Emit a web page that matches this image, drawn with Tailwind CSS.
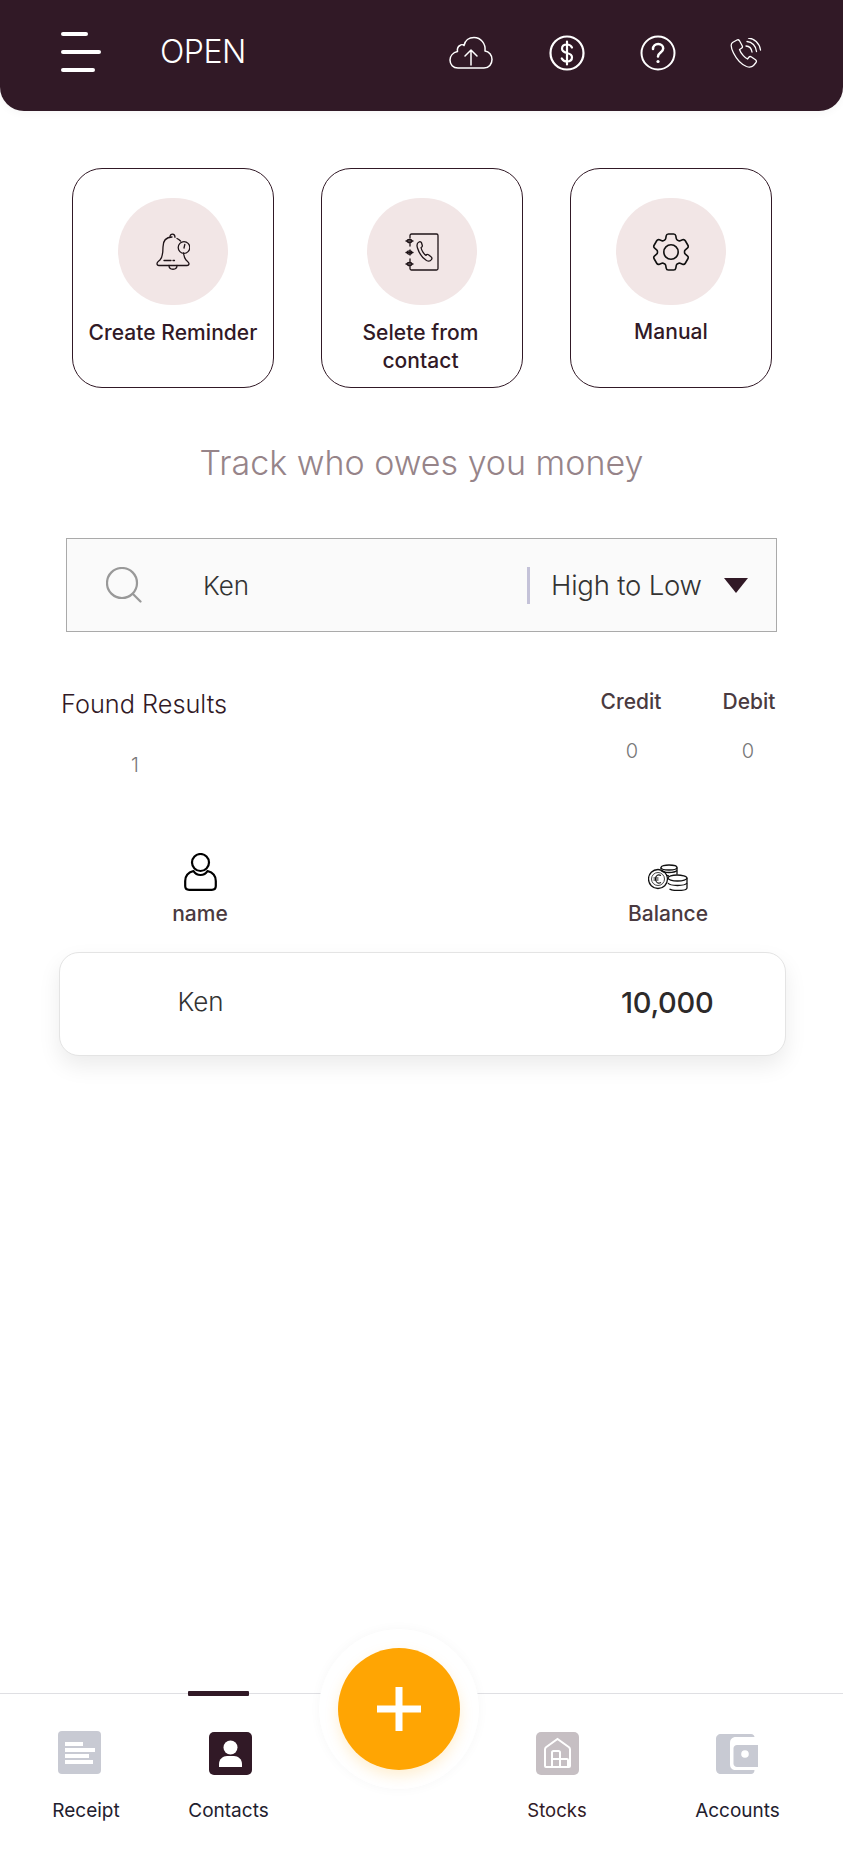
<!DOCTYPE html>
<html><head><meta charset="utf-8"><script src="https://cdn.jsdelivr.net/npm/@tailwindcss/browser@4"></script></head>
<body class="m-0 bg-white">
<div class="relative flex h-[1850px] w-[843px] flex-col overflow-hidden bg-white font-['Inter',sans-serif]">
  <!-- header -->
  <header class="flex h-[111px] shrink-0 items-center rounded-b-[24px] bg-[#311926] pl-[61px] shadow-[0_2px_8px_rgba(0,0,0,0.04)]">
    <div class="flex w-[99px] flex-col gap-[14px] pb-[8px]">
      <span class="h-[4px] w-[27px] rounded-full bg-white"></span>
      <span class="h-[4px] w-[40px] rounded-full bg-white"></span>
      <span class="h-[4px] w-[34px] rounded-full bg-white"></span>
    </div>
    <span class="w-[289px] pb-[7px] text-[32px] font-light leading-none tracking-[-0.5px] text-white">OPEN</span>
    <div class="flex items-center pb-[6px]">
      <svg class="mr-[56px] h-[34px] w-[44px]" viewBox="0 0 44 34" fill="none" stroke="#fff" stroke-width="1.5" stroke-linecap="round" stroke-linejoin="round"><path d="M9 32h26c5 0 8-4 8-8.500 0-4.500-3-8-7-8.500 1-7-4-13.500-11-13.500-5 0-9 3-10 8-1-1-3-1-4 0-2 1-3 3-2.500 6C4 16.500 1 20 1 24c0 4.500 3 8 8 8z"/><path d="M22 29V14m-6 6 6-6 6 6"/></svg>
      <svg class="mr-[55px] h-[36px] w-[36px]" viewBox="0 0 36 36" fill="none" stroke="#fff" stroke-linecap="round"><circle cx="18" cy="18" r="16.500" stroke-width="2.200"/><path d="M23 12.500c-1-2-3-3-5-3-3 0-5 1.700-5 4.200s2 3.500 5 4.300 5 1.800 5 4.300-2 4.200-5 4.200c-2.200 0-4.200-1-5.200-3M18 6.500v23" stroke-width="2.200"/></svg>
      <svg class="mr-[54px] h-[36px] w-[36px]" viewBox="0 0 36 36" fill="none" stroke="#fff" stroke-linecap="round"><circle cx="18" cy="18" r="16.500" stroke-width="2"/><path d="M13 14c0-3 2.200-5 5.200-5s5 2 5 4.500c0 4-5.200 4-5.200 8" stroke-width="2.500"/><circle cx="18" cy="26.500" r="1.600" fill="#fff" stroke="none"/></svg>
      <svg class="h-[30px] w-[32px]" viewBox="0 0 32 30" fill="none" stroke="#fff" stroke-width="1.300" stroke-linecap="round" stroke-linejoin="round"><path d="M7 2 2.500 4.500C0.500 6 1 10 3.500 15c3 6 8 11.500 13 13.500 3 1 5.500.5 7-1l2.500-3c.8-1 .5-2-.5-2.700l-4-2.800c-1-.7-2-.5-2.700.3l-1.300 1.700c-2-.7-6.500-5-8-9.500l2-1.200c1-.6 1.200-1.500.7-2.500L9.500 2.800C9 2 8 1.500 7 2z"/><path d="M16 8c3 .2 5.500 2.500 6 6M17 3.500c5 .3 9 4.500 9.500 10M18.500 0c5.500.5 11 5 12 12"/></svg>
    </div>
  </header>

  <!-- action cards -->
  <section class="ml-[72px] mt-[57px] flex gap-[47px]">
    <div class="flex h-[220px] w-[202px] flex-col items-center rounded-[30px] border border-[#311926] pt-[29px]">
      <div class="flex h-[107px] w-[110px] items-center justify-center rounded-full bg-[#f2e6e6]">
        <svg class="h-[38px] w-[34px]" viewBox="0 0 34 38" fill="none" stroke="#1f1418" stroke-width="1.300" stroke-linecap="round" stroke-linejoin="round"><path d="M16 4c-6 0-9 4-9 10 0 5 0 10-3 13-1 1-3 2-3 3.500S2 32.500 3 32.500h28c1.500 0 2-1 2-2s-2-2.500-3-3.500c-1.500-1.500-2-3.500-2.500-7"/><path d="M14 4c0-4 5-4 5 .3M21 5.500c1.500.7 2.500 1.500 3.500 2.500"/><path d="M13 32.500c0 5 8 5 8 0M8 27.500h7M17 27.500h1.500"/><circle cx="28" cy="14.500" r="5.800"/><path d="m28.800 11.500-.8 3.500"/></svg>
      </div>
      <p class="mt-[14px] whitespace-nowrap text-center text-[21px] font-medium leading-[28px] tracking-[0.05px] text-[#311926]">Create Reminder</p>
    </div>
    <div class="flex h-[220px] w-[202px] flex-col items-center rounded-[30px] border border-[#311926] pt-[29px]">
      <div class="flex h-[107px] w-[110px] items-center justify-center rounded-full bg-[#f2e6e6]">
        <svg class="h-[38px] w-[34px]" viewBox="0 0 34 38" fill="none" stroke="#1f1418" stroke-width="1.300" stroke-linecap="round" stroke-linejoin="round"><path d="M5 5V2.500c0-.800.700-1.500 1.500-1.500h25c.800 0 1.500.700 1.500 1.500v33c0 .800-.700 1.500-1.500 1.500h-25C5.700 37 5 36.300 5 35.500V33M5 22v-5M5 13V10M5 26v3"/><path d="M1 8h7M1 19.500h7M1 31h7"/><ellipse cx="4.500" cy="8" rx="2.300" ry="1.600"/><ellipse cx="4.500" cy="19.500" rx="2.300" ry="1.600"/><ellipse cx="4.500" cy="31" rx="2.300" ry="1.600"/><path d="M14 9c-2 1-2.500 3-1.500 6 1.500 5 5 10 9 12.500 2 1 4 .5 5-1 .8-1 .5-2-.5-2.700l-2.500-2c-1-.6-2-.3-2.500.5-2-1-4.500-5-5-7.800 1-.3 1.500-1 1.300-2L16.500 9.800c-.3-1-1.500-1.300-2.500-.8z"/></svg>
      </div>
      <p class="mr-[3px] mt-[14px] w-[170px] text-center text-[21px] font-medium leading-[28px] tracking-[0.05px] text-[#311926]">Selete from contact</p>
    </div>
    <div class="flex h-[220px] w-[202px] flex-col items-center rounded-[30px] border border-[#311926] pt-[29px]">
      <div class="flex h-[107px] w-[110px] items-center justify-center rounded-full bg-[#f2e6e6]">
        <svg class="h-[48px] w-[48px]" viewBox="0 0 24 24" fill="none" stroke="#111" stroke-width=".8" stroke-linecap="round" stroke-linejoin="round"><path d="M9.594 3.940c.090-.542.560-.940 1.110-.940h2.593c.550 0 1.020.398 1.110.940l.213 1.281c.063.374.313.686.645.870.074.040.147.083.220.127.324.196.720.257 1.075.124l1.217-.456a1.125 1.125 0 0 1 1.370.490l1.296 2.247a1.125 1.125 0 0 1-.260 1.431l-1.003.827c-.293.240-.438.613-.431.992a6.759 6.759 0 0 1 0 .255c-.007.378.138.750.430.990l1.005.828c.424.350.534.954.260 1.430l-1.298 2.247a1.125 1.125 0 0 1-1.369.491l-1.217-.456c-.355-.133-.750-.072-1.076.124a6.570 6.570 0 0 1-.220.128c-.331.183-.581.495-.644.869l-.213 1.280c-.090.543-.560.941-1.110.941h-2.594c-.550 0-1.020-.398-1.110-.940l-.213-1.281c-.062-.374-.312-.686-.644-.870a6.520 6.520 0 0 1-.220-.127c-.325-.196-.720-.257-1.076-.124l-1.217.456a1.125 1.125 0 0 1-1.369-.490l-1.297-2.247a1.125 1.125 0 0 1 .260-1.431l1.004-.827c.292-.240.437-.613.430-.992a6.932 6.932 0 0 1 0-.255c.007-.378-.138-.750-.430-.990l-1.004-.828a1.125 1.125 0 0 1-.260-1.430l1.297-2.247a1.125 1.125 0 0 1 1.370-.491l1.216.456c.356.133.751.072 1.076-.124.072-.044.146-.087.220-.128.332-.183.582-.495.644-.869l.214-1.281Z"/><circle cx="12" cy="12" r="3.600"/></svg>
      </div>
      <p class="mt-[13px] text-center text-[21px] font-medium leading-[28px] tracking-[0.05px] text-[#311926]">Manual</p>
    </div>
  </section>

  <h2 class="mt-[56px] w-[843px] text-center text-[34px] font-light leading-[38px] text-[#968489]">Track who owes you money</h2>

  <!-- search -->
  <div class="ml-[66px] mt-[56px] flex h-[94px] w-[711px] shrink-0 items-center border border-[#aaaaaa] bg-[#fafafa] pl-[39px]">
    <svg class="h-[36px] w-[36px] shrink-0" viewBox="0 0 36 36" fill="none" stroke="#999" stroke-width="2.200" stroke-linecap="round"><circle cx="16" cy="16" r="15"/><path d="m27 27 7.500 7.500"/></svg>
    <span class="ml-[61px] mt-[2px] w-[324px] text-[26px] font-light leading-none text-[#333]">Ken</span>
    <span class="h-[37px] w-[3px] bg-[#c4c2d8]"></span>
    <span class="ml-[21px] mt-[2px] w-[173px] whitespace-nowrap text-[27.500px] font-light leading-none tracking-[-0.2px] text-[#333]">High to Low</span>
    <span class="h-0 w-0 border-x-[12px] border-t-[15px] border-x-transparent border-t-[#311926]"></span>
  </div>

  <!-- summary -->
  <section class="ml-[61px] mt-[56px] flex h-[96px] w-[716px] justify-between">
    <div class="w-[180px]">
      <p class="whitespace-nowrap text-[25.300px] font-light leading-[31px] text-[#311926]">Found Results</p>
      <p class="mt-[32px] w-[148px] text-center text-[20px] font-light leading-[28px] text-[#777]">1</p>
    </div>
    <div class="flex">
      <div class="w-[121px] text-center">
        <p class="w-[62px] text-[21px] font-medium leading-[28px] text-[#4a3a40]">Credit</p>
        <p class="ml-[1px] mt-[21px] w-[62px] text-[20px] font-light leading-[28px] text-[#777]">0</p>
      </div>
      <div class="w-[56px] text-center">
        <p class="text-[21px] font-medium leading-[28px] text-[#4a3a40]">Debit</p>
        <p class="mt-[21px] w-[54px] text-[20px] font-light leading-[28px] text-[#777]">0</p>
      </div>
    </div>
  </section>

  <!-- column heads -->
  <section class="ml-[60px] mt-[68px] flex h-[74px] w-[725px] items-end">
    <div class="flex w-[280px] flex-col items-center">
      <svg class="h-[38px] w-[33px]" viewBox="0 0 33 38" fill="none" stroke="#000" stroke-width="2.200" stroke-linecap="round" stroke-linejoin="round"><ellipse cx="16.500" cy="9.500" rx="8.500" ry="8.500"/><path d="M9.500 18C4 19.500 1.200 23 1.200 28v5c0 2.500 1.500 3.800 4 3.800h22.600c2.500 0 4-1.300 4-3.800v-5c0-5-2.800-8.500-8.300-10-1.500 2.500-4 4-7 4s-5.500-1.500-7-4z"/></svg>
      <p class="mt-[11px] text-[21px] font-medium leading-[24px] text-[#4a3a40]">name</p>
    </div>
    <div class="ml-[283px] flex w-[90px] flex-col items-center">
      <svg class="h-[27px] w-[40px]" viewBox="0 0 40 27" fill="none" stroke="#111" stroke-width="1.300"><circle cx="10" cy="15" r="9.500"/><circle cx="10" cy="15" r="6.500" stroke-width=".8"/><path d="M13 11.500c-3-1.500-5.500 0-5.500 3.500s2.500 5 5.500 3.500M5.500 14h5M5.500 16h5" stroke-width="1.100"/><path d="M13 5V3.500C13 2 17 1 21 1s8 1 8 2.500v7"/><path d="M13 3.500c0 1.500 4 2.500 8 2.500s8-1 8-2.500M13 6.500c1 1 4 2 8 2s7-1 8-2M18 11.500c1 0 2 .3 3 .3"/><path d="M20 14c0-1.500 4-3 9-3s10 1.500 10 3v10c0 1.500-4 2.500-9.500 2.500-3.500 0-6.500-.5-8-1.500"/><path d="M20 14c0 1.500 4 3 9.500 3s9.500-1.500 9.500-3M20 19c1 1.500 5 2.500 9.500 2.500S38 20.500 39 19"/></svg>
      <p class="mt-[11px] text-[21px] font-medium leading-[24px] text-[#4a3a40]">Balance</p>
    </div>
  </section>

  <!-- row -->
  <div class="ml-[59px] mt-[26px] flex h-[104px] w-[727px] shrink-0 items-center rounded-[20px] border border-[#e4e4e4] bg-white shadow-[0_10px_22px_rgba(0,0,0,0.08)]">
    <span class="mb-[4px] w-[281px] text-center text-[26px] font-light leading-none text-[#333]">Ken</span>
    <span class="mb-[4px] ml-[280px] w-[90px] text-center text-[29px] font-medium leading-none tracking-[-0.3px] text-[#2d2a2a]">10,000</span>
  </div>

  <!-- bottom nav -->
  <nav class="relative mt-auto flex h-[157px] shrink-0 border-t-[1.500px] border-[#dfdfe3] bg-white">
    <div class="flex w-[172px] flex-col items-center pt-[37px]">
      <div class="ml-[-14px] flex h-[43px] w-[43px] flex-col justify-center gap-[2px] rounded-[4px] bg-[#c8cad3] pl-[7px]">
        <span class="h-[4px] w-[18px] bg-white"></span><span class="h-[4px] w-[30px] bg-white"></span><span class="h-[4px] w-[24px] bg-white"></span><span class="h-[4px] w-[28px] bg-white"></span>
      </div>
      <span class="mt-[25px] text-[19px] font-normal leading-[24px] text-[#22202e]">Receipt</span>
    </div>
    <div class="relative flex w-[112px] flex-col items-center pt-[38px]">
      <span class="absolute left-[16px] top-[-3px] h-[5px] w-[61px] rounded-[1px] bg-[#311926]"></span>
      <svg class="ml-[5px] h-[43px] w-[43px]" viewBox="0 0 43 43"><rect width="43" height="43" rx="5" fill="#311926"/><circle cx="21.500" cy="15.500" r="7" fill="#fff"/><path d="M10 35v-3c0-5 4-8 8-8h7c4 0 8 3 8 8v3z" fill="#fff"/></svg>
      <span class="ml-[1px] mt-[24px] text-[19px] font-normal leading-[24px] text-[#22202e]">Contacts</span>
    </div>
    <div class="flex w-[198px] flex-col items-center"></div>
    <div class="flex w-[150px] flex-col items-center pt-[38px]">
      <svg class="h-[43px] w-[43px]" viewBox="0 0 43 43" fill="none"><rect width="43" height="43" rx="5" fill="#c6bfc3"/><path d="M9 34V17.500c0-1 .4-1.700 1-2.200L21.500 7 33 15.300c.6.500 1 1.200 1 2.200V34c0 .6-.4 1-1 1H10c-.600 0-1-.400-1-1z" stroke="#fff" stroke-width="2"/><path d="M16 35V20.500c0-1 .5-1.500 1.500-1.500h5c1 0 1.500.5 1.500 1.500V35M16 27h15c.5 0 1 .5 1 1v7M24 27v8" stroke="#fff" stroke-width="2"/></svg>
      <span class="mt-[23px] text-[18.500px] font-normal leading-[24px] text-[#311926]">Stocks</span>
    </div>
    <div class="flex w-[211px] flex-col items-center pt-[40px]">
      <svg class="ml-[-1px] h-[40px] w-[42px]" viewBox="0 0 42 40"><path d="M5 0h30c2 0 3.500 1.500 3.500 3H20c-4 0-6 2.500-6 6v21c0 4 2 6 6 6h18.500c0 2.500-1.500 4-3.500 4H5c-3 0-5-2-5-5V5c0-3 2-5 5-5z" fill="#c8cad3"/><path d="M21 11h21v22H21c-2 0-3.500-1.500-3.500-3.500v-15C17.500 12.500 19 11 21 11z" fill="#c8cad3"/><circle cx="29" cy="20" r="3.800" fill="#fff"/></svg>
      <span class="mt-[25px] text-[19px] font-normal leading-[24px] text-[#22202e]">Accounts</span>
    </div>
    <button class="absolute left-[319px] top-[-65px] flex h-[160px] w-[160px] items-center justify-center rounded-full bg-white shadow-[0_0_12px_rgba(0,0,0,0.035)]">
      <span class="flex h-[122px] w-[122px] items-center justify-center rounded-full bg-[#ffa503] shadow-[0_6px_14px_rgba(255,165,3,0.18)]">
        <svg class="h-[44px] w-[44px]" viewBox="0 0 44 44" fill="#fff"><rect x="18.500" width="7" height="44"/><rect y="18.500" width="44" height="7"/></svg>
      </span>
    </button>
  </nav>
</div>
</body></html>
